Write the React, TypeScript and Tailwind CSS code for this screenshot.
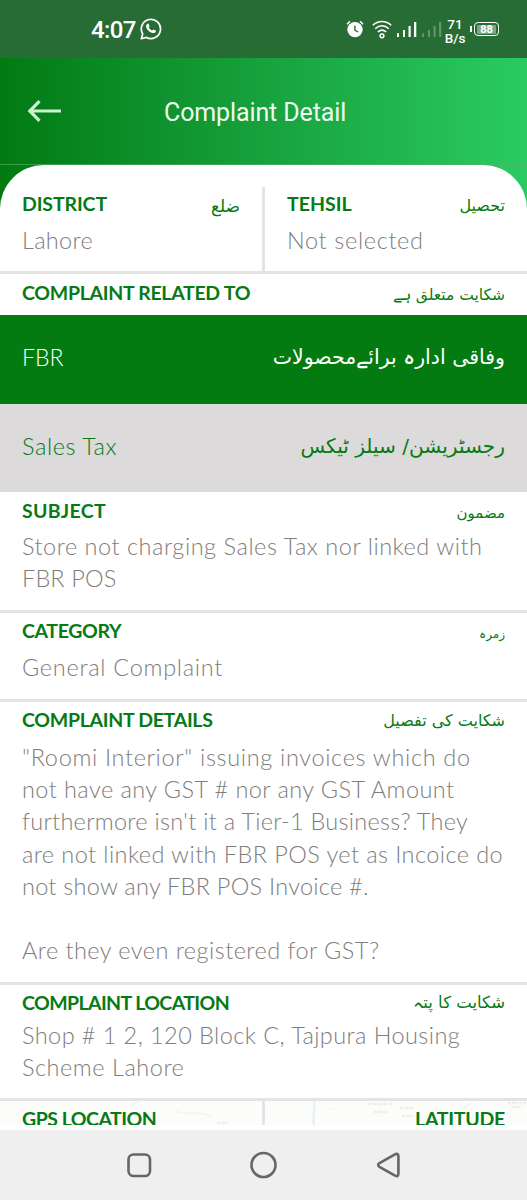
import type { ReactNode } from "react";
import clsx from "clsx";

type Line = { text: string; className?: string };

function Heading({ en, ur }: { en: Line; ur?: Line }) {
  return (
    <div className="flex h-6 items-center justify-between whitespace-nowrap text-[#067a14]">
      <h2 className={clsx("text-[19.5px] leading-6 font-bold", en.className)}>{en.text}</h2>
      {ur && (
        <span dir="rtl" lang="ur" className={clsx("font-['DejaVu_Sans',sans-serif] leading-6", ur.className)}>
          {ur.text}
        </span>
      )}
    </div>
  );
}

function Body({ lines, className }: { lines: Line[]; className?: string }) {
  return (
    <p className={clsx("text-[23.5px] leading-[32.2px] font-light whitespace-nowrap text-[#807d7d]", className)}>
      {lines.map((line, i) => (
        <span key={i} className={clsx("block h-[32.2px]", line.className)}>
          {line.text}
        </span>
      ))}
    </p>
  );
}

function Section({ className, children }: { className?: string; children: ReactNode }) {
  return <section className={clsx("border-b-3 border-[#e4e4e4] px-[22px]", className)}>{children}</section>;
}

function StatusBar() {
  return (
    <div className="flex h-[58px] items-center bg-[#276b35] font-[Roboto,sans-serif] text-white">
      <span className="ml-[91px] w-[49px] pt-px text-[24px] font-medium tracking-[-0.6px]">4:07</span>
      <svg viewBox="0 0 22 22" className="h-[22px] w-[22px]" aria-hidden="true">
        <path d="M1.3 20.8 2.7 15.9A9.6 9.6 0 1 1 6.4 19.4Z" fill="none" stroke="white" strokeWidth="1.7" strokeLinejoin="round" />
        <path
          d="M7.5 5.8c.5-.4 1-.2 1.2.3l.8 1.8c.2.5-.7 1.3-.7 1.5.7 1.4 1.8 2.5 3.3 3.1.4 0 1-1.2 1.5-1.1l2 1c.6.3.2 1.5-.4 2-1.5 1.2-3.8.4-5.5-.7-2-1.4-3.7-3.6-3.6-5.5 0-1 .7-1.9 1.4-2.4Z"
          fill="white"
        />
      </svg>

      <svg viewBox="0 0 18 18" className="ml-[184px] h-[18px] w-[18px]" aria-hidden="true">
        <circle cx="9" cy="9.6" r="7.7" fill="white" />
        <path d="M1 4.2 4 1.3M17 4.2 14 1.3" stroke="white" strokeWidth="1.5" />
        <path d="M8.9 5.5v4.6l3.2 1.9" fill="none" stroke="#276b35" strokeWidth="1.4" />
      </svg>
      <svg viewBox="0 0 20 19" className="ml-[8px] h-[19px] w-[20px]" fill="none" stroke="white" strokeWidth="1.5" aria-hidden="true">
        <path d="M.8 5.2C6 .1 14 .1 19.2 5.2M3.2 8.7c4-3.9 9.6-3.9 13.6 0M5.8 12c2.5-2.2 5.9-2.2 8.4 0" />
        <circle cx="10" cy="15.8" r="1.9" />
      </svg>
      <svg viewBox="0 0 45 16" className="ml-[5px] h-4 w-[45px]" fill="white" aria-hidden="true">
        <path d="M0 12.3h2V16H0zM6 9h2v7H6zM11.5 5h2.2v11h-2.2zM17 1h2.3v15H17z" />
        <path d="M25 12.3h2V16h-2zM31 9h2v7h-2zM36.5 5h2.2v11h-2.2zM42 1h2.3v15H42z" opacity=".28" />
      </svg>
      <div className="ml-[3px] flex w-[20px] flex-col items-center pt-[3px] text-[13.5px] leading-[14px] font-medium">
        <span>71</span>
        <span>B/s</span>
      </div>
      <div className="ml-[5px] h-[6px] w-[2px] bg-white" />
      <div className="ml-[2px] flex h-[14px] w-[25px] items-center justify-center rounded-[4px] border-[1.5px] border-white">
        <span className="w-[19px] rounded-[1px] bg-[#7fa688] text-center text-[11px] leading-[9px] font-bold">88</span>
      </div>
    </div>
  );
}

function AppHeader() {
  return (
    <header className="flex h-[107px] items-center border-b border-[#5fae6c]/60">
      <svg viewBox="0 0 34 22" className="ml-[27px] h-[22px] w-[34px]" fill="none" stroke="#cdf0cf" strokeWidth="3.2" aria-hidden="true">
        <path d="M34 11H3M12.5 1.2 2.8 11l9.7 9.8" />
      </svg>
      <h1 className="ml-[103px] pt-[3px] font-[Roboto,sans-serif] text-[25px] tracking-[-0.12px] whitespace-nowrap text-[#effbef]">
        Complaint Detail
      </h1>
    </header>
  );
}

function NavBar() {
  return (
    <nav className="h-[70px] bg-[#efefef]">
      <svg viewBox="0 0 527 70" className="h-full w-full" fill="none" stroke="#666" strokeWidth="2.6" aria-hidden="true">
        <rect x="128.5" y="24.5" width="21.5" height="21.5" rx="5" />
        <circle cx="263.5" cy="35" r="12" />
        <path d="M379.5 33.2 394.5 24.6Q398.4 22.6 398.4 26.4V43.6Q398.4 47.4 394.5 45.4L379.5 36.8Q376.7 35 379.5 33.2Z" />
      </svg>
    </nav>
  );
}

export default function App() {
  return (
    <div className="flex h-[1200px] w-[527px] flex-col overflow-hidden bg-white font-[Lato,sans-serif]">
      <StatusBar />
      <div className="h-[1072px] overflow-hidden bg-linear-to-r from-[#027a11] to-[#2acb62]">
        <AppHeader />
        <main className="h-[965px] overflow-hidden rounded-t-[44px] bg-white">
          <div className="flex h-[109px] border-b-3 border-[#e4e4e4] pt-[22px]">
            <div className="w-[265px] border-r-3 border-[#e4e4e4] px-[22px] pt-[5px]">
              <Heading
                en={{ text: "DISTRICT", className: "tracking-[-0.12px]" }}
                ur={{ text: "ضلع", className: "pt-[3px] text-[17px]" }}
              />
              <Body lines={[{ text: "Lahore", className: "tracking-[0.3px]" }]} className="pt-[8px]" />
            </div>
            <div className="flex-1 px-[22px] pt-[5px]">
              <Heading en={{ text: "TEHSIL" }} ur={{ text: "تحصیل", className: "pt-1 text-[16px]" }} />
              <Body lines={[{ text: "Not selected", className: "tracking-[0.66px]" }]} className="pt-[8px]" />
            </div>
          </div>

          <div className="h-[41px] px-[22px] pt-[7px]">
            <Heading
              en={{ text: "COMPLAINT RELATED TO", className: "tracking-[-0.3px]" }}
              ur={{ text: "شکایت متعلق ہے", className: "pt-[3px] text-[15.5px]" }}
            />
          </div>

          <div className="flex h-[89px] items-center justify-between bg-[#037b11] px-[22px] pb-[4px] text-[23px] font-light text-white">
            <span>FBR</span>
            <span dir="rtl" lang="ur" className="font-['DejaVu_Sans',sans-serif] text-[20.5px] font-normal">
              وفاقی ادارہ برائےمحصولات
            </span>
          </div>
          <div className="flex h-[88px] items-center justify-between bg-[#dcdadb] px-[22px] pb-[3px] text-[23.5px] font-light text-[#067a14]">
            <span className="tracking-[0.56px]">Sales Tax</span>
            <span dir="rtl" lang="ur" className="font-['DejaVu_Sans',sans-serif] text-[20.1px] font-normal">
              رجسٹریشن/ سیلز ٹیکس
            </span>
          </div>

          <Section className="h-[121px] pt-[7px]">
            <Heading
              en={{ text: "SUBJECT", className: "tracking-[0.3px]" }}
              ur={{ text: "مضمون", className: "pt-[3px] text-[15px]" }}
            />
            <Body
              className="pt-[7px]"
              lines={[
                { text: "Store not charging Sales Tax nor linked with", className: "tracking-[0.53px]" },
                { text: "FBR POS", className: "tracking-[0.12px]" },
              ]}
            />
          </Section>

          <Section className="h-[89px] pt-[6px]">
            <Heading
              en={{ text: "CATEGORY", className: "tracking-[-0.35px]" }}
              ur={{ text: "زمرہ", className: "pt-[5px] text-[12px]" }}
            />
            <Body className="pt-[8px]" lines={[{ text: "General Complaint", className: "tracking-[0.72px]" }]} />
          </Section>

          <Section className="h-[283px] pt-[6px]">
            <Heading
              en={{ text: "COMPLAINT DETAILS", className: "tracking-[-0.3px]" }}
              ur={{ text: "شکایت کی تفصیل", className: "pt-[2px] text-[16px]" }}
            />
            <Body
              className="pt-[9px]"
              lines={[
                { text: '"Roomi Interior" issuing invoices which do', className: "tracking-[0.67px]" },
                { text: "not have any GST # nor any GST Amount", className: "tracking-[0.43px]" },
                { text: "furthermore isn't it a Tier-1 Business? They", className: "tracking-[0.28px]" },
                { text: "are not linked with FBR POS yet as Incoice do", className: "tracking-[0.42px]" },
                { text: "not show any FBR POS Invoice #.", className: "tracking-[0.26px]" },
                { text: "" },
                { text: "Are they even registered for GST?", className: "tracking-[0.46px]" },
              ]}
            />
          </Section>

          <Section className="h-[116px] pt-[6px]">
            <Heading
              en={{ text: "COMPLAINT LOCATION", className: "tracking-[-0.6px]" }}
              ur={{ text: "شکایت کا پتہ", className: "text-[16.5px]" }}
            />
            <Body
              className="pt-[4px]"
              lines={[
                { text: "Shop # 1 2, 120 Block C, Tajpura Housing", className: "tracking-[0.43px]" },
                { text: "Scheme Lahore", className: "tracking-[0.53px]" },
              ]}
            />
          </Section>

          <div className="relative flex h-6 overflow-hidden bg-[#fcfcfb]">
            {/* washed-out map behind the coordinates */}
            <svg viewBox="0 0 527 24" className="absolute inset-0 h-6 w-[527px]" fill="none" aria-hidden="true">
              <path d="M314 0c2 8-2 14 0 24" stroke="#e6f1f5" strokeWidth="2.5" />
              <path d="M130 4l9-4M175 10c14 6 22-2 38 6M462 8l10-6M330 8h6" stroke="#f4f3f1" strokeWidth="1.5" />
              <path d="M368 3h24M374 11h14M400 7h14M402 15h12M217 22h12M508 2h18M511 6h12" stroke="#eeeeec" strokeWidth="2.5" strokeDasharray="3 1 5 1.5" />
            </svg>
            <div className="relative w-[265px] border-r-3 border-[#e4e4e4] px-[22px] pt-[6px]">
              <Heading en={{ text: "GPS LOCATION", className: "tracking-[-0.5px]" }} />
            </div>
            <div className="relative flex flex-1 justify-end px-[22px] pt-[6px]">
              <Heading en={{ text: "LATITUDE", className: "tracking-[-0.25px]" }} />
            </div>
          </div>
        </main>
      </div>
      <NavBar />
    </div>
  );
}
